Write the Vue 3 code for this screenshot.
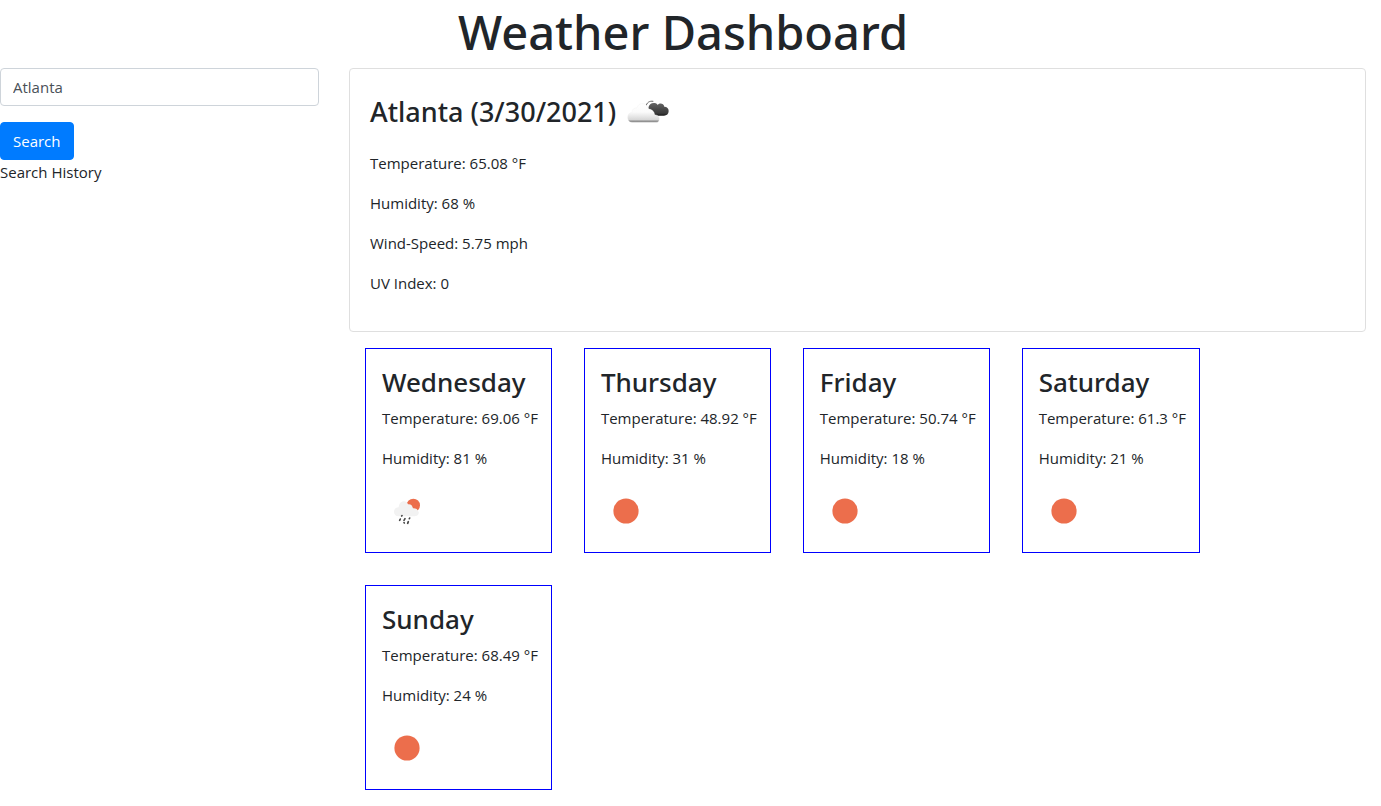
<script setup>
import { ref } from 'vue'

const city = ref('Atlanta')

const current = [
  'Temperature: 65.08 °F',
  'Humidity: 68 %',
  'Wind-Speed: 5.75 mph',
  'UV Index: 0',
]

const forecast = [
  { day: 'Wednesday', temperature: '69.06', humidity: 81, icon: 'rain' },
  { day: 'Thursday', temperature: '48.92', humidity: 31, icon: 'sun' },
  { day: 'Friday', temperature: '50.74', humidity: 18, icon: 'sun' },
  { day: 'Saturday', temperature: '61.3', humidity: 21, icon: 'sun' },
  { day: 'Sunday', temperature: '68.49', humidity: 24, icon: 'sun' },
]
</script>

<template>
  <div class="page">
    <h1 class="title">Weather Dashboard</h1>
    <div class="layout">
      <aside>
        <form @submit.prevent>
          <input v-model="city" class="city" type="text" aria-label="City" />
          <button class="search" type="submit">Search</button>
        </form>
        <div class="history">Search History</div>
      </aside>
      <main>
        <section class="current">
          <h2 class="heading">
            Atlanta (3/30/2021)
            <svg class="icon" viewBox="0 0 150 150" role="img" aria-label="Broken clouds">
              <defs>
                <linearGradient id="dark" x1="0" y1="0" x2="0" y2="1">
                  <stop offset="0" stop-color="#666" />
                  <stop offset="0.5" stop-color="#484848" />
                  <stop offset="0.8" stop-color="#3c3c3c" />
                  <stop offset="1" stop-color="#181818" />
                </linearGradient>
                <linearGradient id="light" x1="0" y1="0" x2="0" y2="1">
                  <stop offset="0" stop-color="#fff" />
                  <stop offset="0.45" stop-color="#fbfbfb" />
                  <stop offset="0.85" stop-color="#d8d8d8" />
                  <stop offset="0.93" stop-color="#999" />
                  <stop offset="1" stop-color="#777" />
                </linearGradient>
              </defs>
              <path fill="none" stroke="#666" stroke-width="3" d="M66 58C68 47 76 41 88 43" />
              <path fill="url(#dark)" d="M73 62C75 53 81 48 89 48C95 48 99 50 101 54C108 46 119 50 121 59C129 59 134 64 134 72C134 81 128 86 120 86H92C91 76 84 68 73 66Z" />
              <path fill="url(#light)" stroke="#eee" stroke-width="1" d="M24 106C15 106 11 100 11 91C11 83 16 77 24 76C24 67 30 62 38 63C41 54 48 49 56 50C65 50 72 56 74 66C84 67 91 73 92 83C101 84 106 88 106 95C106 102 102 106 96 106Z" />
            </svg>
          </h2>
          <p v-for="line in current" :key="line">{{ line }}</p>
        </section>
        <section class="forecast">
          <article v-for="item in forecast" :key="item.day" class="day">
            <h3>{{ item.day }}</h3>
            <p>Temperature: {{ item.temperature }} °F</p>
            <p>Humidity: {{ item.humidity }} %</p>
            <svg v-if="item.icon === 'sun'" class="icon" viewBox="0 0 50 50" role="img" aria-label="Clear sky">
              <circle cx="25" cy="25" r="12.6" fill="#ec6e4c" />
            </svg>
            <svg v-else class="icon" viewBox="0 0 150 150" role="img" aria-label="Rain">
              <circle cx="94" cy="58" r="20" fill="#ec6e4c" />
              <path fill="#f2f2f2" d="M50 91C41 91 36 85 36 77C36 69 42 64 50 64C51 53 57 46 66 46C72 46 76 49 78 55C87 54 91 59 93 67C101 66 107 70 108 75C111 78 111 82 109 85C107 89 103 91 98 91Z" />
              <g stroke="#484848" stroke-width="5" stroke-linecap="round">
                <path d="M60 89l-1 1M55 99l-2 4M69 98l-3 5M83 96l-1 2M66 110l1 1M79 107l-2 5" />
              </g>
            </svg>
          </article>
        </section>
      </main>
    </div>
  </div>
</template>

<style>
body {
  margin: 0;
  background: #fff;
}
</style>

<style scoped>
* {
  box-sizing: border-box;
}

.page {
  padding-right: 15px;
  color: #212529;
  font-family: 'Segoe UI', 'Open Sans', 'Noto Sans', sans-serif;
  font-size: 15px;
  line-height: 24px;
}

h1,
h2,
h3 {
  margin: 0;
  font-family: 'Segoe UI', 'Noto Sans', 'Open Sans', sans-serif;
  font-weight: 500;
}

p {
  margin: 0 0 16px;
}

.title {
  margin-bottom: 4px;
  font-size: 47px;
  line-height: 64px;
  text-align: center;
}

.layout {
  display: grid;
  grid-template-columns: calc((100% + 30px) / 4 - 30px) minmax(0, 1fr);
  gap: 30px;
}

.city {
  display: block;
  width: 100%;
  height: 38px;
  margin-bottom: 16px;
  padding: 6px 12px;
  border: 1px solid #ced4da;
  border-radius: 4px;
  background: #fff;
  color: #495057;
  font: inherit;
}

.search {
  display: block;
  padding: 6px 12px;
  border: 1px solid #007bff;
  border-radius: 4px;
  background: #007bff;
  color: #fff;
  font: inherit;
}

.current {
  padding: 20px;
  border: 1px solid #dfdfdf;
  border-radius: 4px;
}

.heading {
  display: flex;
  align-items: center;
  gap: 8px;
  height: 46px;
  margin-bottom: 16px;
  font-size: 27px;
  line-height: 46px;
}

.forecast {
  display: flex;
  flex-wrap: wrap;
  gap: 32px;
  padding: 16px;
}

.day {
  padding: 16px 13px 16px 16px;
  border: 1px solid #00f;
}

.day h3 {
  margin-bottom: 6px;
  font-size: 26px;
  line-height: 35px;
}

.icon {
  display: block;
  flex: none;
  width: 50px;
  height: 50px;
}
</style>
